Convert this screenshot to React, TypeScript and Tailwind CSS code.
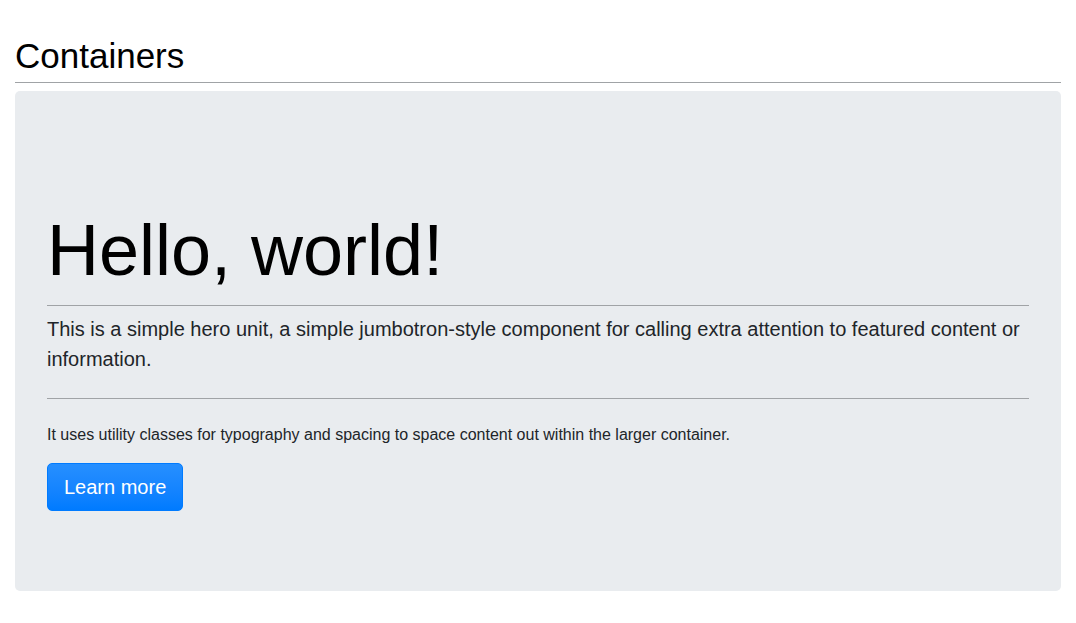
import React from "react";

export default function App() {
  return (
    <div className="min-h-screen bg-white px-[15px] pt-[35px] font-['Liberation_Sans',Arial,sans-serif]">
      <h2 className="border-b border-[#a0a3a6] pb-[5px] text-[35px] leading-[42px] text-black">
        Containers
      </h2>
      <div className="mt-[8px] h-[500px] rounded-[5px] bg-[#e9ecef] px-8 pt-[116px]">
        <h1 className="text-[72px] leading-[86px] text-black">Hello, world!</h1>
        <div className="mt-[12px] border-t border-[#a0a3a6]" />
        <p className="mt-[8px] text-[20px] leading-[30px] text-[#212529]">
          This is a simple hero unit, a simple jumbotron-style component for calling extra attention to featured
          content or information.
        </p>
        <div className="mt-[24px] border-t border-[#a0a3a6]" />
        <p className="mt-[24px] text-[16px] leading-[24px] text-[#212529]">
          It uses utility classes for typography and spacing to space content out within the larger container.
        </p>
        <button className="mt-[16px] rounded-[5px] border border-[#007bff] bg-gradient-to-b from-[#268fff] to-[#007bff] px-4 py-2 text-[20px] leading-[30px] text-white">
          Learn more
        </button>
      </div>
    </div>
  );
}
